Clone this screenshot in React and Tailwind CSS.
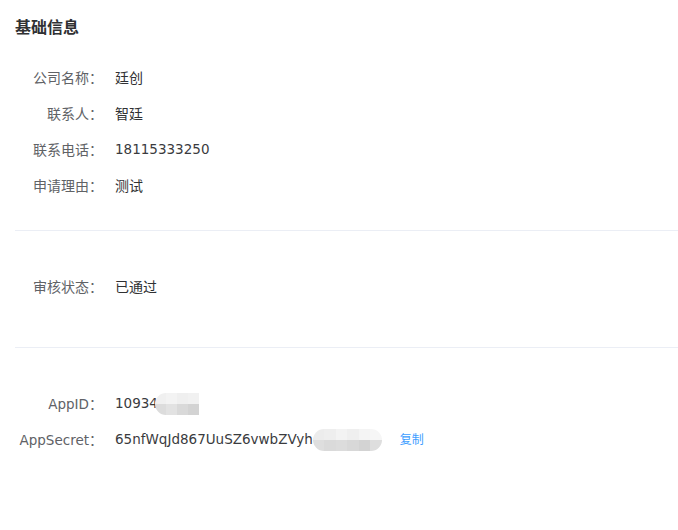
import React from "react";

const FONT = { fontFamily: '"DejaVu Sans", "Noto Sans CJK SC", sans-serif' };

function Mosaic({ top, bottom, cell = "w-[11px]", className = "" }){
  return (
    <span className={"inline-flex flex-col overflow-hidden align-middle " + className}>
      <span className="flex">
        {top.map((c, i) => <span key={i} className={"h-[11px] " + cell} style={{ background: c }} />)}
      </span>
      <span className="flex">
        {bottom.map((c, i) => <span key={i} className={"h-[11px] " + cell} style={{ background: c }} />)}
      </span>
    </span>
  )
}

function Row({ label, children }){
  return (
    <div className="flex h-9 items-center text-sm">
      <div className="w-[100px] shrink-0 pr-3 text-right text-[#606266]">{label}</div>
      <div className="flex items-center text-[#303133]">{children}</div>
    </div>
  )
}

export default function App(){
  return (
    <div className="min-h-screen bg-white pl-[15px] pt-4" style={FONT}>
      <div className="text-base font-bold leading-6 text-[#303133]">基础信息</div>

      <div className="mt-5 pb-[26px] border-b border-[#ebeef5]">
        <Row label="公司名称：">廷创</Row>
        <Row label="联系人：">智廷</Row>
        <Row label="联系电话："><span className="text-[13.5px] text-[#3a3b3e]">18115333250</span></Row>
        <Row label="申请理由：">测试</Row>
      </div>

      <div className="pt-[38px] pb-[42px] border-b border-[#ebeef5]">
        <Row label="审核状态：">已通过</Row>
      </div>

      <div className="pt-[38px]">
        <Row label={<><span className="text-[13.5px]">AppID</span>：</>}>
          <span className="text-[13.5px] text-[#3a3b3e]">10934</span>
          <Mosaic
            className="-ml-[3px] rounded-l-full"
            top={["#f0f0f0", "#f3f3f3", "#efefef", "#f1f1f1"]}
            bottom={["#dcdcdc", "#e2e2e2", "#d9d9d9", "#d3d3d3"]}
          />
        </Row>
        <Row label={<><span className="text-[13.5px]">AppSecret</span>：</>}>
          <span className="text-[13.5px] text-[#3a3b3e]">65nfWqJd867UuSZ6vwbZVyh</span>
          <Mosaic
            cell="w-[11.5px]"
            className="rounded-full"
            top={["#ececec", "#eeeeee", "#f3f3f3", "#efefef", "#f4f4f4", "#f6f6f6"]}
            bottom={["#dedede", "#dadada", "#dcdcdc", "#d8d8d8", "#d3d3d3", "#dedede"]}
          />
          <button className="ml-[18px] text-xs text-[#409eff]">复制</button>
        </Row>
      </div>
    </div>
  );
}
